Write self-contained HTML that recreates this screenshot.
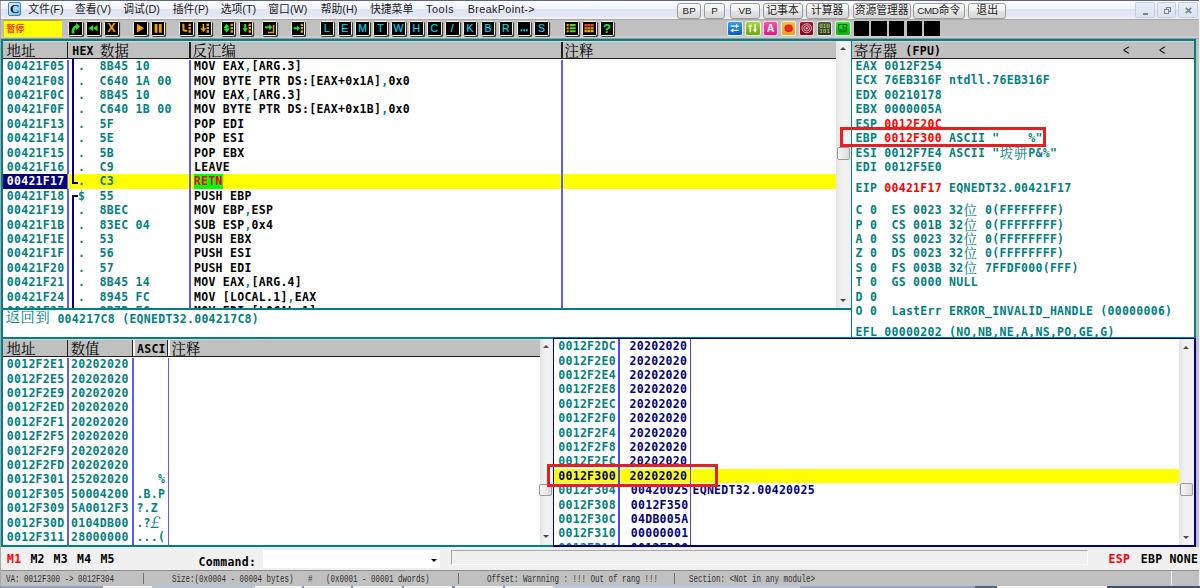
<!DOCTYPE html><html lang="zh"><head><meta charset="utf-8"><title>OllyDbg</title><style>
*{margin:0;padding:0;box-sizing:border-box}
html,body{width:1200px;height:588px;overflow:hidden;background:#c0c0c0}
body{position:relative;font-family:"DejaVu Sans Mono","Liberation Mono","Noto Serif CJK SC",monospace;font-size:11.5px;letter-spacing:.277px;font-weight:bold;line-height:14.4px;color:#000}
.a{position:absolute}
.t{position:absolute;white-space:pre;height:14.4px;line-height:14.4px;transform:translate(-1.2px,-0.2px)}
.tl{color:#008080}
.nv{color:#000080}
.dk i{font-style:normal;color:#008080}
.rd{color:#ff0000}
.cj{font-family:"Noto Serif CJK SC","Noto Sans CJK SC",serif;font-weight:400;font-size:14.4px;letter-spacing:0}
.t .cj{display:inline-block;vertical-align:top;height:14.4px;line-height:13.4px;overflow:visible;font-size:13.6px;letter-spacing:.8px}
.pane{position:absolute;background:#fff;overflow:hidden}
.hdr{position:absolute;background:#c0c0c0;border-bottom:1.2px solid #202020;border-top:1px solid #d2d6d6;height:18.1px;overflow:hidden}
.hdr .cj{position:absolute;top:-0.4px;height:16.4px;line-height:16.4px;font-size:14.4px;color:#000;white-space:pre;margin-left:-0.9px}
.hdr .m{position:absolute;top:1.8px;white-space:pre}
.vs{position:absolute;width:1.4px;background:#5c5cff}
.hs{position:absolute;width:1.2px;background:#202020;top:0;height:18px}
.sb{position:absolute;background:linear-gradient(90deg,#e4e4e4,#f2f2f2 40%,#f0f0f0)}
.th{position:absolute;border:1px solid #9a9a9a;border-radius:2px;background:linear-gradient(90deg,#f6f6f6,#dcdcdc)}
.ar{position:absolute;width:0;height:0;border-left:3.2px solid transparent;border-right:3.2px solid transparent}
.up{border-bottom:3.4px solid #484848}
.dn{border-top:3.4px solid #484848}
.menu{position:absolute;left:0;top:0;width:1200px;height:20.4px;background:linear-gradient(#fdfdff 0,#f1f3fa 45%,#dfe4f3 46%,#e2e7f5 85%,#f2f2f4 87%,#f0f0f0 96%,#a8a8a8 97%)}
.mi{position:absolute;top:1px;height:17px;line-height:17px;font-family:"Liberation Sans","Noto Sans CJK SC",sans-serif;font-weight:400;font-size:10.8px;color:#1a1a1a;white-space:pre}
.mb{letter-spacing:0;position:absolute;top:2.5px;height:16.3px;border:1px solid #9a9a9a;border-radius:3px;background:linear-gradient(#fbfbfb,#efefef 50%,#e2e2e2 51%,#d8d8d8);font-family:"Liberation Sans","Noto Sans CJK SC",sans-serif;font-weight:400;font-size:10.8px;line-height:13.6px;text-align:center;color:#222;white-space:pre;overflow:hidden}
.tb{position:absolute;top:20.5px;width:14.7px;height:15px;background:#000;border:1.3px solid #f2eedc;border-radius:1.5px;box-shadow:1.1px 1.1px 0 #3c3c3c;overflow:hidden}
.tb svg{position:absolute;left:0;top:0;width:12.1px;height:12.4px}
.cb{position:absolute;top:21.3px;width:15.4px;height:14.6px;border-radius:2.5px;overflow:hidden;border:1px solid rgba(255,255,255,.85)}
.cb svg{position:absolute;left:0;top:0;width:100%;height:100%}
.st{position:absolute;top:571.8px;height:13px;line-height:13px;font-family:"Liberation Mono",monospace;font-weight:400;font-size:11.5px;color:#303030;white-space:pre;letter-spacing:0;transform-origin:0 50%;transform:scaleX(0.652)}
</style></head><body>
<div class="menu"></div>
<div class="a" style="left:0;top:0;width:1200px;height:1.2px;background:#5c6680"></div>
<div class="a" style="left:8.1px;top:2.4px;width:13.2px;height:13.6px;border:1px solid #3a88c0;border-radius:2px;background:linear-gradient(135deg,#e8f6ff,#6cb8ea);font-family:'Liberation Serif',serif;font-size:13px;line-height:11.5px;letter-spacing:0;text-align:center;color:#0c1830;font-weight:bold">C</div>
<div class="mi" id="mi0" style="left:28.3px;letter-spacing:0px">文件(F)</div>
<div class="mi" id="mi1" style="left:75px;letter-spacing:0px">查看(V)</div>
<div class="mi" id="mi2" style="left:123.3px;letter-spacing:0px">调试(D)</div>
<div class="mi" id="mi3" style="left:172.7px;letter-spacing:0px">插件(P)</div>
<div class="mi" id="mi4" style="left:220.7px;letter-spacing:0px">选项(T)</div>
<div class="mi" id="mi5" style="left:268.3px;letter-spacing:0px">窗口(W)</div>
<div class="mi" id="mi6" style="left:320.7px;letter-spacing:0px">帮助(H)</div>
<div class="mi" id="mi7" style="left:370px;letter-spacing:0px">快捷菜单</div>
<div class="mi" id="mi8" style="left:426px;letter-spacing:0.6px">Tools</div>
<div class="mi" id="mi9" style="left:467.7px;letter-spacing:0.38px">BreakPoint-&gt;</div>
<div class="mb" style="left:677px;width:24.3px"><span style="font-size:9.8px">BP</span></div>
<div class="mb" style="left:703.8px;width:21.7px"><span style="font-size:9.8px">P</span></div>
<div class="mb" style="left:730px;width:30.0px"><span style="font-size:9.8px">VB</span></div>
<div class="mb" style="left:762.5px;width:40.0px">记事本</div>
<div class="mb" style="left:805.5px;width:43.3px">计算器</div>
<div class="mb" style="left:852.5px;width:58.3px">资源管理器</div>
<div class="mb" style="left:913px;width:51.5px"><span style="font-size:9.8px;letter-spacing:-.3px">CMD</span>命令</div>
<div class="mb" style="left:968px;width:38.3px">退出</div>
<div class="a" style="left:1135px;top:2px;width:20.0px;height:15.6px;border:1px solid #c2cee0;border-radius:1.5px;background:linear-gradient(#e6eef9,#d8e3f3)"><div class="a" style="left:7px;top:9.8px;width:5px;height:1.8px;background:#7a8494"></div></div>
<div class="a" style="left:1156.8px;top:2px;width:19.5px;height:15.6px;border:1px solid #c2cee0;border-radius:1.5px;background:linear-gradient(#e6eef9,#d8e3f3)"><div class="a" style="left:8px;top:4px;width:5px;height:4.5px;border:1px solid #7a8494;border-top-width:1.6px"></div><div class="a" style="left:6px;top:6.2px;width:5px;height:4.5px;border:1px solid #7a8494;border-top-width:1.6px;background:#f0f0f0"></div></div>
<div class="a" style="left:1178px;top:2px;width:20.0px;height:15.6px;border:1px solid #c2cee0;border-radius:1.5px;background:linear-gradient(#e6eef9,#d8e3f3)"><svg class="a" style="left:6px;top:4.2px" width="7" height="7" viewBox="0 0 7 7"><path d="M0.8 0.8L6.2 6.2M6.2 0.8L0.8 6.2" stroke="#7a8494" stroke-width="1.7" fill="none"/></svg></div>
<div class="a" style="left:0;top:20.4px;width:1200px;height:17.8px;background:#c0c0c0"></div>
<div class="a" style="left:0;top:35.8px;width:1200px;height:2.2px;background:#cdcdcd"></div><div class="a" style="left:0;top:38px;width:1200px;height:1.3px;background:#9a9a9a"></div>
<div class="a" style="left:2.9px;top:20.4px;width:58.9px;height:16.9px;background:#ffff00;overflow:hidden;border-top:1px solid #b0b020;border-left:1px solid #c8c830"><span class="a" style="left:2.6px;top:0.4px;line-height:14px;font-family:'Noto Sans CJK SC',sans-serif;font-weight:700;font-size:8.8px;color:#ff3000;white-space:pre">暂停</span></div>
<div class="tb" style="left:68.2px"><svg viewBox="0 0 12 12" preserveAspectRatio="none"><path d="M2.8 11.2 C2 7.5 3.8 4 7 3.2 L7 1 L11 4.4 L7 7.8 L7 5.8 C5.4 6.4 4.8 8.6 5.6 11.2 Z" fill="#20e020"/></svg></div>
<div class="tb" style="left:86.2px"><svg viewBox="0 0 12 12" preserveAspectRatio="none"><path d="M6 3L6 9L1.5 6ZM10.5 3L10.5 9L6 6Z" fill="#20e020"/></svg></div>
<div class="tb" style="left:104.2px;font-family:'Liberation Sans',sans-serif;font-weight:bold;font-size:12.5px;letter-spacing:0;line-height:12.6px;text-align:center;color:#f0a000">X</div>
<div class="tb" style="left:133.0px"><svg viewBox="0 0 12 12" preserveAspectRatio="none"><path d="M3 1.8L10 6L3 10.2Z" fill="#f0a000"/></svg></div>
<div class="tb" style="left:150.8px"><svg viewBox="0 0 12 12" preserveAspectRatio="none"><path d="M2.6 2h2.8v8.4H2.6zM6.8 2h2.8v8.4H6.8z" fill="#f0a000"/></svg></div>
<div class="tb" style="left:179.0px"><svg viewBox="0 0 12 12" preserveAspectRatio="none"><path d="M3.4 1.6v5.2q0 1.6 1.6 1.6h2.2" stroke="#f0a000" stroke-width="2" fill="none"/><path d="M8.5 1.6h2.4v2.3H8.5zM8.5 4.8h2.4v2.3H8.5zM8.5 8h2.4v2.3H8.5z" fill="#f0a000"/></svg></div>
<div class="tb" style="left:197.2px"><svg viewBox="0 0 12 12" preserveAspectRatio="none"><path d="M4.5 2v4H2.5L5.3 10L8 6H6.2V2z" fill="#f0a000"/><path d="M8.5 1.6h2.4v2.3H8.5zM8.5 4.8h2.4v2.3H8.5zM8.5 8h2.4v2.3H8.5z" fill="#f0a000"/></svg></div>
<div class="tb" style="left:220.6px"><svg viewBox="0 0 12 12" preserveAspectRatio="none"><path d="M1.8 5.2L4.6 1.6L7.4 5.2H5.6V6L1.8 6ZM7.4 6.8L4.6 10.4L1.8 6.8H3.6V6L7.4 6Z" fill="#20e020"/><path d="M8.5 1.6h2.4v2.3H8.5zM8.5 4.8h2.4v2.3H8.5zM8.5 8h2.4v2.3H8.5z" fill="#f0a000"/></svg></div>
<div class="tb" style="left:238.5px"><svg viewBox="0 0 12 12" preserveAspectRatio="none"><path d="M4.2 2v4H2.5L5.2 10L8 6H6.2V2z" fill="#20e020"/><path d="M8.5 1.6h2.4v2.3H8.5zM8.5 4.8h2.4v2.3H8.5zM8.5 8h2.4v2.3H8.5z" fill="#f0a000"/></svg></div>
<div class="tb" style="left:261.9px"><svg viewBox="0 0 12 12" preserveAspectRatio="none"><path d="M2 4h4V2.2L9.5 5L6 7.8V6H2z" fill="#20e020"/><path d="M10.5 3v7.2H5" stroke="#f0a000" stroke-width="1.5" fill="none"/></svg></div>
<div class="tb" style="left:290.6px"><svg viewBox="0 0 12 12" preserveAspectRatio="none"><path d="M1.5 5h3.5V3.2L8 6L5 8.8V7H1.5z" fill="#20e020"/><path d="M8.6 1.6h2.4v2.3H8.6zM8.6 4.8h2.4v2.3H8.6zM8.6 8h2.4v2.3H8.6z" fill="#f0a000"/></svg></div>
<div class="tb" style="left:319.6px;font-family:'Liberation Sans',sans-serif;font-weight:400;font-size:10.5px;line-height:12.4px;text-align:center;color:#00d8e8;-webkit-text-stroke:.15px #00d8e8">L</div>
<div class="tb" style="left:337.5px;font-family:'Liberation Sans',sans-serif;font-weight:400;font-size:10.5px;line-height:12.4px;text-align:center;color:#00d8e8;-webkit-text-stroke:.15px #00d8e8">E</div>
<div class="tb" style="left:355.4px;font-family:'Liberation Sans',sans-serif;font-weight:400;font-size:10.5px;line-height:12.4px;text-align:center;color:#00d8e8;-webkit-text-stroke:.15px #00d8e8">M</div>
<div class="tb" style="left:373.3px;font-family:'Liberation Sans',sans-serif;font-weight:400;font-size:10.5px;line-height:12.4px;text-align:center;color:#00d8e8;-webkit-text-stroke:.15px #00d8e8">T</div>
<div class="tb" style="left:391.2px;font-family:'Liberation Sans',sans-serif;font-weight:400;font-size:10.5px;line-height:12.4px;text-align:center;color:#00d8e8;-webkit-text-stroke:.15px #00d8e8">W</div>
<div class="tb" style="left:409.1px;font-family:'Liberation Sans',sans-serif;font-weight:400;font-size:10.5px;line-height:12.4px;text-align:center;color:#00d8e8;-webkit-text-stroke:.15px #00d8e8">H</div>
<div class="tb" style="left:427.0px;font-family:'Liberation Sans',sans-serif;font-weight:400;font-size:10.5px;line-height:12.4px;text-align:center;color:#00d8e8;-webkit-text-stroke:.15px #00d8e8">C</div>
<div class="tb" style="left:444.9px;font-family:'Liberation Sans',sans-serif;font-weight:400;font-size:10.5px;line-height:12.4px;text-align:center;color:#00d8e8;-webkit-text-stroke:.15px #00d8e8">/</div>
<div class="tb" style="left:462.8px;font-family:'Liberation Sans',sans-serif;font-weight:400;font-size:10.5px;line-height:12.4px;text-align:center;color:#00d8e8;-webkit-text-stroke:.15px #00d8e8">K</div>
<div class="tb" style="left:480.7px;font-family:'Liberation Sans',sans-serif;font-weight:400;font-size:10.5px;line-height:12.4px;text-align:center;color:#00d8e8;-webkit-text-stroke:.15px #00d8e8">B</div>
<div class="tb" style="left:498.6px;font-family:'Liberation Sans',sans-serif;font-weight:400;font-size:10.5px;line-height:12.4px;text-align:center;color:#00d8e8;-webkit-text-stroke:.15px #00d8e8">R</div>
<div class="tb" style="left:516.5px"><svg viewBox="0 0 12 12" preserveAspectRatio="none"><path d="M2.5 7h1.8v2H2.5zM5.2 7h1.8v2H5.2zM7.9 7h1.8v2H7.9z" fill="#00d8e8"/></svg></div>
<div class="tb" style="left:534.4px;font-family:'Liberation Sans',sans-serif;font-weight:400;font-size:10.5px;line-height:12.4px;text-align:center;color:#00d8e8;-webkit-text-stroke:.15px #00d8e8">S</div>
<div class="tb" style="left:564.2px"><svg viewBox="0 0 12 12" preserveAspectRatio="none"><path d="M1.5 2h2.2v2H1.5zM1.5 5h2.2v2H1.5zM1.5 8h2.2v2H1.5z" fill="#f0a000"/><path d="M4.6 2h6v2h-6zM4.6 5h6v2h-6zM4.6 8h6v2h-6z" fill="#58d020"/></svg></div>
<div class="tb" style="left:581.9px"><svg viewBox="0 0 12 12" preserveAspectRatio="none"><path d="M1.5 2h9v2.4h-9z" fill="#e05030"/><path d="M1.5 4.8h9v2.4h-9z" fill="#f08020"/><path d="M1.5 7.6h9v2.4h-9z" fill="#f0c000"/><path d="M4.2 2v8M7.4 2v8M1.5 4.6h9M1.5 7.4h9" stroke="#402000" stroke-width=".6"/></svg></div>
<div class="tb" style="left:599.8px;font-family:'Liberation Sans',sans-serif;font-weight:bold;font-size:13px;line-height:13.4px;text-align:center;color:#20f020">?</div>
<div class="cb" style="left:727.4px;background:linear-gradient(#3aa0f0,#0a5ec0)"><svg viewBox="0 0 15 15" preserveAspectRatio="none"><path d="M3 4.2h6V2.5L12.5 5L9 7.5V5.8H3zM12 9.2H6V7.5L2.5 10L6 12.5V10.8h6z" fill="#fff"/></svg></div>
<div class="cb" style="left:745.2px;background:linear-gradient(#a8d838,#6aa810)"><svg viewBox="0 0 15 15" preserveAspectRatio="none"><path d="M4.8 2.5L7.3 6H5.6v6.2H4V6H2.3zM10.2 12.5L7.7 9h1.7V2.8H11V9h1.7z" fill="#fff"/></svg></div>
<div class="cb" style="left:763.0px;background:linear-gradient(#ff50a8,#f01080)"><svg viewBox="0 0 15 15" preserveAspectRatio="none"><text x="7.5" y="12" text-anchor="middle" font-family="Liberation Sans" font-weight="bold" font-size="12" fill="#fff">A</text></svg></div>
<div class="cb" style="left:780.8px;background:linear-gradient(#f8c040,#f0a020)"><svg viewBox="0 0 15 15" preserveAspectRatio="none"><circle cx="7.5" cy="7.5" r="4.6" fill="#c02818"/><circle cx="7.5" cy="7.5" r="3.2" fill="#ff2020"/></svg></div>
<div class="cb" style="left:798.7px;background:linear-gradient(#a01830,#800820)"><svg viewBox="0 0 15 15" preserveAspectRatio="none"><circle cx="7.5" cy="7.5" r="5.3" fill="none" stroke="#f0c8d0" stroke-width="1"/><circle cx="7.5" cy="7.5" r="3.2" fill="none" stroke="#f0c8d0" stroke-width="1"/><circle cx="7.5" cy="7.5" r="1.3" fill="#f0c8d0"/></svg></div>
<div class="cb" style="left:817.0px;background:linear-gradient(#585858,#303030)"><svg viewBox="0 0 15 15" preserveAspectRatio="none"><text x="7.5" y="6.8" text-anchor="middle" font-family="Liberation Sans" font-weight="bold" font-size="6.4" fill="#90d830">010</text><text x="7.5" y="13" text-anchor="middle" font-family="Liberation Sans" font-weight="bold" font-size="6.4" fill="#90d830">101</text></svg></div>
<div class="cb" style="left:835.2px;background:linear-gradient(#30e030,#10b010)"><svg viewBox="0 0 15 15" preserveAspectRatio="none"><path d="M3 3h9v6.5H3z" fill="none" stroke="#0a6a0a" stroke-width="1.2"/><path d="M8 3v4h4M3 11.5h9" stroke="#0a6a0a" stroke-width="1.2" fill="none"/></svg></div>
<div class="a" style="left:853.6px;top:21.2px;width:15.4px;height:14.8px;background:#000"></div>
<div class="a" style="left:871.3px;top:21.2px;width:15.4px;height:14.8px;background:#000"></div>
<div class="a" style="left:889.0px;top:21.2px;width:15.4px;height:14.8px;background:#000"></div>
<div class="a" style="left:906.7px;top:21.2px;width:15.4px;height:14.8px;background:#000"></div>
<div class="a" style="left:924.4px;top:21.2px;width:15.4px;height:14.8px;background:#000"></div>
<div class="a" style="left:1.4px;top:39.3px;width:1195px;height:508.1px;background:#008080"></div>
<div class="pane" id="dis" style="left:3.0px;top:41.2px;width:847.8px;height:267.2px">
<div class="hdr" style="left:0;top:0;width:832.8px">
<span class="cj" style="left:4.5px">地址</span>
<span class="m" style="left:69.2px">HEX </span><span class="cj" style="left:98px">数据</span>
<span class="cj" style="left:190.5px">反汇编</span>
<span class="cj" style="left:562.5px">注释</span>
<div class="hs" style="left:64.2px"></div><div class="hs" style="left:186.4px"></div><div class="hs" style="left:558.4px"></div>
</div>
<div class="vs" style="left:64.2px;top:18.8px;height:260px"></div>
<div class="t tl" style="left:5.0px;top:18.1px">00421F05</div>
<div class="t tl" style="left:76.2px;top:18.1px">.  8B45 10</div>
<div class="t dk" style="left:192.2px;top:18.1px">MOV EAX<i>,</i>[ARG.3]</div>
<div class="t tl" style="left:5.0px;top:32.5px">00421F08</div>
<div class="t tl" style="left:76.2px;top:32.5px">.  C640 1A 00</div>
<div class="t dk" style="left:192.2px;top:32.5px">MOV BYTE PTR DS:[EAX+0x1A]<i>,</i>0x0</div>
<div class="t tl" style="left:5.0px;top:46.9px">00421F0C</div>
<div class="t tl" style="left:76.2px;top:46.9px">.  8B45 10</div>
<div class="t dk" style="left:192.2px;top:46.9px">MOV EAX<i>,</i>[ARG.3]</div>
<div class="t tl" style="left:5.0px;top:61.3px">00421F0F</div>
<div class="t tl" style="left:76.2px;top:61.3px">.  C640 1B 00</div>
<div class="t dk" style="left:192.2px;top:61.3px">MOV BYTE PTR DS:[EAX+0x1B]<i>,</i>0x0</div>
<div class="t tl" style="left:5.0px;top:75.7px">00421F13</div>
<div class="t tl" style="left:76.2px;top:75.7px">.  5F</div>
<div class="t dk" style="left:192.2px;top:75.7px">POP EDI</div>
<div class="t tl" style="left:5.0px;top:90.1px">00421F14</div>
<div class="t tl" style="left:76.2px;top:90.1px">.  5E</div>
<div class="t dk" style="left:192.2px;top:90.1px">POP ESI</div>
<div class="t tl" style="left:5.0px;top:104.5px">00421F15</div>
<div class="t tl" style="left:76.2px;top:104.5px">.  5B</div>
<div class="t dk" style="left:192.2px;top:104.5px">POP EBX</div>
<div class="t tl" style="left:5.0px;top:118.9px">00421F16</div>
<div class="t tl" style="left:76.2px;top:118.9px">.  C9</div>
<div class="t dk" style="left:192.2px;top:118.9px">LEAVE</div>
<div class="a" style="left:0;top:133.3px;width:64.2px;height:14.4px;background:#000080"></div>
<div class="a" style="left:65.4px;top:133.3px;width:767.4px;height:14.4px;background:#ffff00"></div>
<div class="a" style="left:190.8px;top:133.3px;width:29px;height:14.4px;background:#00ff00"></div>
<div class="t " style="left:5.0px;top:133.3px;color:#fff">00421F17</div>
<div class="t tl" style="left:76.2px;top:133.3px">.  C3</div>
<div class="t rd" style="left:192.2px;top:133.3px">RETN</div>
<div class="t tl" style="left:5.0px;top:147.7px">00421F18</div>
<div class="t tl" style="left:76.2px;top:147.7px">$  55</div>
<div class="t dk" style="left:192.2px;top:147.7px">PUSH EBP</div>
<div class="t tl" style="left:5.0px;top:162.1px">00421F19</div>
<div class="t tl" style="left:76.2px;top:162.1px">.  8BEC</div>
<div class="t dk" style="left:192.2px;top:162.1px">MOV EBP<i>,</i>ESP</div>
<div class="t tl" style="left:5.0px;top:176.5px">00421F1B</div>
<div class="t tl" style="left:76.2px;top:176.5px">.  83EC 04</div>
<div class="t dk" style="left:192.2px;top:176.5px">SUB ESP<i>,</i>0x4</div>
<div class="t tl" style="left:5.0px;top:190.9px">00421F1E</div>
<div class="t tl" style="left:76.2px;top:190.9px">.  53</div>
<div class="t dk" style="left:192.2px;top:190.9px">PUSH EBX</div>
<div class="t tl" style="left:5.0px;top:205.3px">00421F1F</div>
<div class="t tl" style="left:76.2px;top:205.3px">.  56</div>
<div class="t dk" style="left:192.2px;top:205.3px">PUSH ESI</div>
<div class="t tl" style="left:5.0px;top:219.7px">00421F20</div>
<div class="t tl" style="left:76.2px;top:219.7px">.  57</div>
<div class="t dk" style="left:192.2px;top:219.7px">PUSH EDI</div>
<div class="t tl" style="left:5.0px;top:234.1px">00421F21</div>
<div class="t tl" style="left:76.2px;top:234.1px">.  8B45 14</div>
<div class="t dk" style="left:192.2px;top:234.1px">MOV EAX<i>,</i>[ARG.4]</div>
<div class="t tl" style="left:5.0px;top:248.5px">00421F24</div>
<div class="t tl" style="left:76.2px;top:248.5px">.  8945 FC</div>
<div class="t dk" style="left:192.2px;top:248.5px">MOV [LOCAL.1]<i>,</i>EAX</div>
<div class="t tl" style="left:5.0px;top:262.9px">00421F27</div>
<div class="t tl" style="left:76.2px;top:262.9px">.  8B7D FC</div>
<div class="t dk" style="left:192.2px;top:262.9px">MOV EDI<i>,</i>[LOCAL.1]</div>
<div class="vs" style="left:186.4px;top:18.8px;height:260px"></div>
<div class="vs" style="left:558.4px;top:18.8px;height:260px"></div>
<div class="a" style="left:68.6px;top:17.8px;width:2px;height:124.0px;background:#000080"></div>
<div class="a" style="left:68.6px;top:140.5px;width:6.4px;height:2px;background:#000080"></div>
<div class="a" style="left:68.6px;top:153.9px;width:6.4px;height:2px;background:#000080"></div>
<div class="a" style="left:68.6px;top:153.9px;width:2px;height:200px;background:#000080"></div>
<div class="sb" style="left:832.8px;top:0;width:15px;height:267.2px"></div>
<div class="ar up" style="left:836.6px;top:6px"></div>
<div class="th" style="left:833.6px;top:105.8px;width:13px;height:13px"></div>
<div class="ar dn" style="left:836.6px;top:257.5px"></div>
</div>
<div class="pane" style="left:3px;top:310.2px;width:847.8px;height:27.1px">
<div class="t tl" style="left:4px;top:1.4px"><span class="cj" style="font-size:14.2px;letter-spacing:.6px;position:relative;top:-1.2px">返回到</span> 004217C8 (EQNEDT32.004217C8)</div>
</div>
<div class="pane" style="left:3.0px;top:339.2px;width:549.6px;height:205.9px">
<div class="hdr" style="left:0;top:0;width:536.6px;height:17.9px">
<span class="cj" style="left:4.5px">地址</span><span class="cj" style="left:68.6px">数值</span>
<span class="m" style="left:134px">ASCI</span><span class="cj" style="left:169.5px">注释</span>
<div class="hs" style="left:64.2px"></div><div class="hs" style="left:129.2px;width:2.4px;background:linear-gradient(90deg,#202020 50%,#f4f4f4 50%)"></div><div class="hs" style="left:164.4px;width:2.4px;background:linear-gradient(90deg,#202020 50%,#f4f4f4 50%)"></div>
</div>
<div class="vs" style="left:64.2px;top:18.4px;height:200px"></div>
<div class="vs" style="left:129.2px;top:18.4px;height:200px"></div>
<div class="vs" style="left:164.5px;top:18.4px;height:200px"></div>
<div class="t tl" style="left:5.0px;top:18.1px">0012F2E1</div>
<div class="t tl" style="left:69.2px;top:18.1px">20202020</div>
<div class="t tl" style="left:5.0px;top:32.5px">0012F2E5</div>
<div class="t tl" style="left:69.2px;top:32.5px">20202020</div>
<div class="t tl" style="left:5.0px;top:46.9px">0012F2E9</div>
<div class="t tl" style="left:69.2px;top:46.9px">20202020</div>
<div class="t tl" style="left:5.0px;top:61.3px">0012F2ED</div>
<div class="t tl" style="left:69.2px;top:61.3px">20202020</div>
<div class="t tl" style="left:5.0px;top:75.7px">0012F2F1</div>
<div class="t tl" style="left:69.2px;top:75.7px">20202020</div>
<div class="t tl" style="left:5.0px;top:90.1px">0012F2F5</div>
<div class="t tl" style="left:69.2px;top:90.1px">20202020</div>
<div class="t tl" style="left:5.0px;top:104.5px">0012F2F9</div>
<div class="t tl" style="left:69.2px;top:104.5px">20202020</div>
<div class="t tl" style="left:5.0px;top:118.9px">0012F2FD</div>
<div class="t tl" style="left:69.2px;top:118.9px">20202020</div>
<div class="t tl" style="left:5.0px;top:133.3px">0012F301</div>
<div class="t tl" style="left:69.2px;top:133.3px">25202020</div>
<div class="t tl" style="left:134.6px;top:133.3px">   %</div>
<div class="t tl" style="left:5.0px;top:147.7px">0012F305</div>
<div class="t tl" style="left:69.2px;top:147.7px">50004200</div>
<div class="t tl" style="left:134.6px;top:147.7px">.B.P</div>
<div class="t tl" style="left:5.0px;top:162.1px">0012F309</div>
<div class="t tl" style="left:69.2px;top:162.1px">5A0012F3</div>
<div class="t tl" style="left:134.6px;top:162.1px">?.Z</div>
<div class="t tl" style="left:5.0px;top:176.5px">0012F30D</div>
<div class="t tl" style="left:69.2px;top:176.5px">0104DB00</div>
<div class="t tl" style="left:134.6px;top:176.5px">.?<span class="cj" style="font-size:16.5px;font-style:italic;letter-spacing:0;position:relative;top:-1px;left:-1px">£</span></div>
<div class="t tl" style="left:5.0px;top:190.9px">0012F311</div>
<div class="t tl" style="left:69.2px;top:190.9px">28000000</div>
<div class="t tl" style="left:134.6px;top:190.9px">...(</div>
<div class="sb" style="left:536.6px;top:0;width:13px;height:205.9px"></div>
<div class="ar up" style="left:539.6px;top:6px"></div>
<div class="th" style="left:536.2px;top:144.6px;width:12.6px;height:12.6px"></div>
<div class="ar dn" style="left:539.6px;top:196px"></div>
</div>
<div class="pane" style="left:852.3px;top:41.2px;width:341.8px;height:296.2px">
<div class="hdr" style="left:0;top:0;width:341.8px">
<span class="cj" style="left:2.5px">寄存器</span><span class="m" style="left:53px">(FPU)</span>
<span class="m" style="left:270.4px;top:0.4px;transform:scaleX(.7);transform-origin:0 50%;font-family:'Liberation Sans',sans-serif;font-weight:400;font-size:15.5px;letter-spacing:0">&lt;</span><span class="m" style="left:306.6px;top:0.4px;transform:scaleX(.7);transform-origin:0 50%;font-family:'Liberation Sans',sans-serif;font-weight:400;font-size:15.5px;letter-spacing:0">&lt;</span>
</div>
<div class="t" style="left:4.4px;top:17.6px"><span class="tl">EAX 0012F254</span></div>
<div class="t" style="left:4.4px;top:32.1px"><span class="tl">ECX 76EB316F ntdll.76EB316F</span></div>
<div class="t" style="left:4.4px;top:46.6px"><span class="tl">EDX 00210178</span></div>
<div class="t" style="left:4.4px;top:61.1px"><span class="tl">EBX 0000005A</span></div>
<div class="t" style="left:4.4px;top:75.6px"><span class="tl">ESP </span><span class="rd">0012F20C</span></div>
<div class="t" style="left:4.4px;top:90.0px"><span class="tl">EBP </span><span class="rd">0012F300</span><span class="tl"> ASCII "    %"</span></div>
<div class="t" style="left:4.4px;top:104.4px"><span class="tl">ESI 0012F7E4 ASCII "</span><span class="tl cj">坺骈</span><span class="tl">P&amp;%"</span></div>
<div class="t" style="left:4.4px;top:118.8px"><span class="tl">EDI 0012F5E0</span></div>
<div class="t" style="left:4.4px;top:139.4px"><span class="tl">EIP </span><span class="rd">00421F17</span><span class="tl"> EQNEDT32.00421F17</span></div>
<div class="t" style="left:4.4px;top:162.0px"><span class="tl">C 0  ES 0023 32</span><span class="tl cj">位</span><span class="tl"> 0(FFFFFFFF)</span></div>
<div class="t" style="left:4.4px;top:176.4px"><span class="tl">P 0  CS 001B 32</span><span class="tl cj">位</span><span class="tl"> 0(FFFFFFFF)</span></div>
<div class="t" style="left:4.4px;top:190.8px"><span class="tl">A 0  SS 0023 32</span><span class="tl cj">位</span><span class="tl"> 0(FFFFFFFF)</span></div>
<div class="t" style="left:4.4px;top:205.2px"><span class="tl">Z 0  DS 0023 32</span><span class="tl cj">位</span><span class="tl"> 0(FFFFFFFF)</span></div>
<div class="t" style="left:4.4px;top:219.6px"><span class="tl">S 0  FS 003B 32</span><span class="tl cj">位</span><span class="tl"> 7FFDF000(FFF)</span></div>
<div class="t" style="left:4.4px;top:234.0px"><span class="tl">T 0  GS 0000 NULL</span></div>
<div class="t" style="left:4.4px;top:248.4px"><span class="tl">D 0</span></div>
<div class="t" style="left:4.4px;top:262.8px"><span class="tl">O 0  LastErr ERROR_INVALID_HANDLE (00000006)</span></div>
<div class="t" style="left:4.4px;top:283.4px"><span class="tl">EFL 00000202 (NO,NB,NE,A,NS,PO,GE,G)</span></div>
</div>
<div class="a" style="left:552.6px;top:337.6px;width:643.6px;height:209.8px;background:#000080"></div>
<div class="pane" id="stk" style="left:554.4px;top:339.40000000000003px;width:640.0px;height:205.70000000000002px">
<div class="t tl" style="left:5.1px;top:-0.2px">0012F2DC</div>
<div class="t nv" style="left:76.4px;top:-0.2px">20202020</div>
<div class="t tl" style="left:5.1px;top:14.2px">0012F2E0</div>
<div class="t nv" style="left:76.4px;top:14.2px">20202020</div>
<div class="t tl" style="left:5.1px;top:28.6px">0012F2E4</div>
<div class="t nv" style="left:76.4px;top:28.6px">20202020</div>
<div class="t tl" style="left:5.1px;top:43.0px">0012F2E8</div>
<div class="t nv" style="left:76.4px;top:43.0px">20202020</div>
<div class="t tl" style="left:5.1px;top:57.4px">0012F2EC</div>
<div class="t nv" style="left:76.4px;top:57.4px">20202020</div>
<div class="t tl" style="left:5.1px;top:71.8px">0012F2F0</div>
<div class="t nv" style="left:76.4px;top:71.8px">20202020</div>
<div class="t tl" style="left:5.1px;top:86.2px">0012F2F4</div>
<div class="t nv" style="left:76.4px;top:86.2px">20202020</div>
<div class="t tl" style="left:5.1px;top:100.6px">0012F2F8</div>
<div class="t nv" style="left:76.4px;top:100.6px">20202020</div>
<div class="t tl" style="left:5.1px;top:115.0px">0012F2FC</div>
<div class="t nv" style="left:76.4px;top:115.0px">20202020</div>
<div class="a" style="left:0;top:129.4px;width:624.8px;height:14.4px;background:#ffff00"></div>
<div class="t nv" style="left:5.1px;top:129.4px">0012F300</div>
<div class="t nv" style="left:76.4px;top:129.4px">20202020</div>
<div class="t tl" style="left:5.1px;top:143.8px">0012F304</div>
<div class="t nv" style="left:77.6px;top:143.8px">00420025</div>
<div class="t nv" style="left:139.3px;top:143.8px">EQNEDT32.00420025</div>
<div class="t tl" style="left:5.1px;top:158.2px">0012F308</div>
<div class="t nv" style="left:77.6px;top:158.2px">0012F350</div>
<div class="t tl" style="left:5.1px;top:172.6px">0012F30C</div>
<div class="t nv" style="left:77.6px;top:172.6px">04DB005A</div>
<div class="t tl" style="left:5.1px;top:187.0px">0012F310</div>
<div class="t nv" style="left:77.6px;top:187.0px">00000001</div>
<div class="t tl" style="left:5.1px;top:201.4px">0012F314</div>
<div class="t nv" style="left:77.6px;top:201.4px">0012F300</div>
<div class="vs" style="left:63.8px;top:0;height:220px;background:#4848ff"></div>
<div class="vs" style="left:135.3px;top:0;height:220px;background:#4848ff"></div>
<div class="sb" style="left:624.8px;top:0;width:15px;height:210px"></div>
<div class="ar up" style="left:628.8px;top:7px"></div>
<div class="th" style="left:625.4px;top:143.2px;width:13.2px;height:13.2px"></div>
<div class="ar dn" style="left:628.8px;top:196.6px"></div>
</div>
<div class="a" style="left:547.2px;top:464.2px;width:171.1px;height:22.8px;border:3.4px solid #ea1c24"></div>
<div class="a" style="left:840px;top:126.9px;width:205.6px;height:20.5px;border:3.3px solid #ea1c24"></div>
<div class="a" style="left:0;top:547.4px;width:1200px;height:22.6px;background:#f0f0f0"></div>
<div class="t" style="left:8.2px;top:552.1px;color:#ff0000">M1</div>
<div class="t" style="left:31.6px;top:552.1px;color:#000">M2</div>
<div class="t" style="left:54.8px;top:552.1px;color:#000">M3</div>
<div class="t" style="left:78.2px;top:552.1px;color:#000">M4</div>
<div class="t" style="left:101.6px;top:552.1px;color:#000">M5</div>
<div class="t" style="left:199.8px;top:554.8px;color:#000">Command:</div>
<div class="a" style="left:263.4px;top:549.6px;width:176.6px;height:18.8px;background:#fff"></div>
<div class="ar dn" style="left:430.5px;top:558.5px;border-top-color:#000"></div>
<div class="a" style="left:451.3px;top:550.4px;width:637px;height:14.4px;background:#f0f0f0;border:1.2px solid #a8a8a8;border-right-color:#fdfdfd;border-bottom-color:#fdfdfd"></div>
<div class="t" style="left:1109.8px;top:552.1px;color:#ff0000">ESP</div><div class="t" style="left:1142px;top:552.1px;color:#000">EBP</div><div class="t" style="left:1170.6px;top:552.1px;color:#000">NONE</div>
<div class="a" style="left:0;top:570px;width:1200px;height:15px;background:#c0c0c0;border-top:1.2px solid #8c8c8c"></div>
<div class="a" style="left:0;top:585.9px;width:1200px;height:2.1px;background:linear-gradient(90deg,#8aa0bc 0px,#8aa0bc 103px,#f4f6f8 103px,#f4f6f8 152px,#b0c6de 152px,#b0c6de 255px,#f4f6f8 255px,#f4f6f8 302px,#8090a8 302px,#8090a8 304px,#f4f6f8 304px,#f4f6f8 351px,#8090a8 351px,#8090a8 353px,#f4f6f8 353px,#f4f6f8 402px,#8090a8 402px,#8090a8 404px,#f4f6f8 404px,#f4f6f8 452px,#8090a8 452px,#8090a8 455px,#f4f6f8 455px,#f4f6f8 503px,#8090a8 503px,#8090a8 505px,#f4f6f8 505px,#f4f6f8 553px,#b4cce6 553px,#b4cce6 800px,#8ea8c6 800px,#8ea8c6 975px,#506680 975px,#506680 997px,#f4f6f8 997px,#f4f6f8 1107px,#3c5272 1107px,#3c5272 1200px)"></div>
<div class="st" id="s0" style="left:6px">VA: 0012F300 -&gt; 0012F304</div>
<div class="st" id="s1" style="left:171.5px">Size:(0x0004 - 00004 bytes)</div>
<div class="st" id="s2" style="left:307.5px">#</div>
<div class="st" id="s3" style="left:326px">(0x0001 - 00001 dwords)</div>
<div class="st" id="s4" style="left:486.5px">Offset: Warnning : !!! Out of rang !!!</div>
<div class="st" id="s5" style="left:688.5px">Section: &lt;Not in any module&gt;</div>
<div class="a" style="left:143px;top:573px;width:1.2px;height:11px;background:#707070"></div>
<div class="a" style="left:457.5px;top:573px;width:1.2px;height:11px;background:#707070"></div>
<div class="a" style="left:673.5px;top:573px;width:1.2px;height:11px;background:#707070"></div>
<div class="a" style="left:1170.5px;top:571.2px;width:1.2px;height:14px;background:#f4f4f4"></div>
<div class="a" style="left:0;top:1.2px;width:1.3px;height:584.7px;background:#a8a8a8"></div><div class="a" style="left:1198.7px;top:0;width:1.3px;height:586px;background:#f2f2f2"></div>
</body></html>
